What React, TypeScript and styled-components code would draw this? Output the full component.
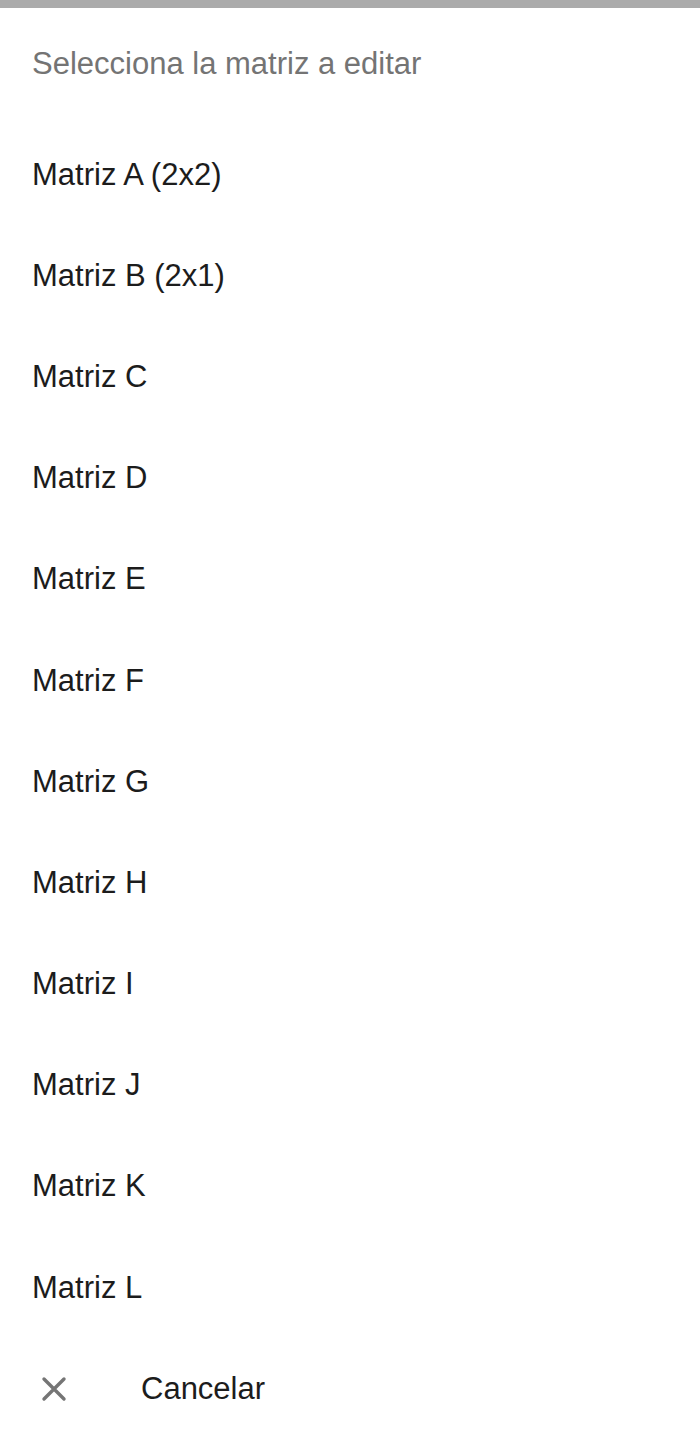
import styled, { createGlobalStyle } from 'styled-components';

const Global = createGlobalStyle`
  body {
    margin: 0;
    background: #ffffff;
    font-family: "Liberation Sans", Arial, sans-serif;
  }
`;

const Sheet = styled.div`
  width: 700px;
  min-height: 1440px;
  background: #ffffff;
  border-top: 8px solid #ababab;
  box-sizing: border-box;
`;

const Title = styled.div`
  height: 112px;
  padding-left: 32px;
  display: flex;
  align-items: center;
  font-size: 31px;
  color: #747474;
`;

const List = styled.div`
  padding-top: 4px;
`;

const Row = styled.div`
  height: 101.2px;
  display: flex;
  align-items: center;
  padding-left: 32px;
  font-size: 31px;
  color: #1c1c1c;
`;

const IconBox = styled.span`
  width: 109px;
  box-sizing: border-box;
  display: flex;
  align-items: center;
  padding-left: 8px;
  color: #757575;
`;

const items = [
  'Matriz A (2x2)',
  'Matriz B (2x1)',
  'Matriz C',
  'Matriz D',
  'Matriz E',
  'Matriz F',
  'Matriz G',
  'Matriz H',
  'Matriz I',
  'Matriz J',
  'Matriz K',
  'Matriz L',
];

export default function App() {
  return (
    <>
      <Global />
      <Sheet>
        <Title>Selecciona la matriz a editar</Title>
        <List>
          {items.map((m) => (
            <Row key={m}>{m}</Row>
          ))}
          <Row>
            <IconBox>
              <svg width="28" height="28" viewBox="0 0 28 28">
                <path d="M4 4 L24 24 M24 4 L4 24" stroke="currentColor" strokeWidth="3.4" strokeLinecap="round" />
              </svg>
            </IconBox>
            Cancelar
          </Row>
        </List>
      </Sheet>
    </>
  );
}
